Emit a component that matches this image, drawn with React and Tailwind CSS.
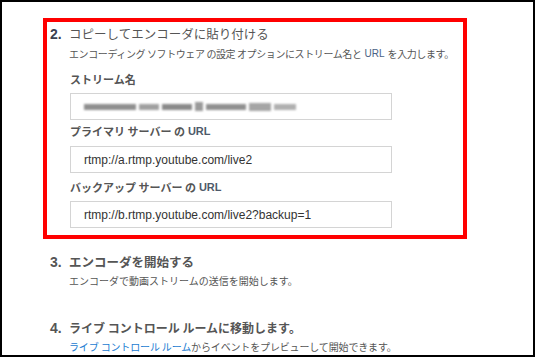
export default function App() {
  const jp = { fontFamily: '"Noto Sans CJK JP", "Liberation Sans", sans-serif' };
  const lat = { fontFamily: '"Liberation Sans", Arial, sans-serif' };
  return (
    <div className="w-[535px] h-[357px] border-2 border-black bg-white overflow-hidden text-[#555]" style={jp}>
      <div className="pl-[41px] pt-[16px]">
        {/* Section 2 */}
        <div className="w-[424px] h-[221px] border-4 border-[#ff0000] pl-[3px]">
          <div className="flex h-[24px] items-center">
            <span className="w-[19px] text-[14px] font-bold text-[#3a4150]" style={lat}>2.</span>
            <span className="text-[12.5px] text-[#555]">コピーしてエンコーダに貼り付ける</span>
          </div>
          <div className="pl-[19px] h-[14px] flex items-center text-[10px] tracking-[-0.4px] text-[#555] whitespace-nowrap">
            エンコーディング ソフトウェア の設定 オプションにストリーム名と <span className="text-[#4b6285] mx-[3px] tracking-normal" style={lat}>URL</span> を入力します。
          </div>
          <div className="pl-[20px]">
            <div className="mt-[12px] h-[14px] flex items-center text-[11px] font-bold text-[#555]">ストリーム名</div>
            <div className="mt-[7px] w-[322px] h-[27px] border border-[#d4d4d4] flex items-center pl-[13px]">
              <div className="flex items-center gap-[3px] blur-[1.3px]">
                <div className="w-[52px] h-[6px] bg-[#8f8f8f]" />
                <div className="w-[20px] h-[6px] bg-[#a0a0a0]" />
                <div className="w-[30px] h-[6px] bg-[#8a8a8a]" />
                <div className="w-[8px] h-[9px] bg-[#9a9a9a]" />
                <div className="w-[40px] h-[6px] bg-[#909090]" />
                <div className="w-[22px] h-[8px] bg-[#a5a5a5]" />
                <div className="w-[22px] h-[6px] bg-[#b0b0b0]" />
              </div>
            </div>
            <div className="mt-[4px] h-[14px] flex items-center text-[11px] font-bold text-[#555]">
              プライマリ サーバー の <span className="ml-[3px] text-[#4d5a6a]" style={lat}>URL</span>
            </div>
            <div className="mt-[8px] w-[322px] h-[27px] border border-[#d4d4d4] flex items-center pl-[13px] text-[12px] text-[#333]" style={lat}>
              rtmp://a.rtmp.youtube.com/live2
            </div>
            <div className="mt-[7px] h-[14px] flex items-center text-[11px] font-bold text-[#555]">
              バックアップ サーバー の <span className="ml-[3px] text-[#4d5a6a]" style={lat}>URL</span>
            </div>
            <div className="mt-[7px] w-[322px] h-[27px] border border-[#d4d4d4] flex items-center pl-[13px] text-[12px] text-[#333]" style={lat}>
              rtmp://b.rtmp.youtube.com/live2?backup=1
            </div>
          </div>
        </div>

        {/* Section 3 */}
        <div className="pl-[7px] mt-[12px]">
          <div className="flex h-[22px] items-center">
            <span className="w-[19px] text-[14px] font-bold text-[#555]" style={lat}>3.</span>
            <span className="text-[12.5px] font-bold text-[#555]">エンコーダを開始する</span>
          </div>
          <div className="pl-[19px] h-[14px] flex items-center text-[10px] text-[#555] whitespace-nowrap">
            エンコーダで動画ストリームの送信を開始します。
          </div>
        </div>

        {/* Section 4 */}
        <div className="pl-[7px] mt-[30px]">
          <div className="flex h-[22px] items-center">
            <span className="w-[19px] text-[14px] font-bold text-[#555]" style={lat}>4.</span>
            <span className="text-[12px] font-bold text-[#555] whitespace-nowrap">ライブ コントロール ルームに移動します。</span>
          </div>
          <div className="pl-[19px] h-[14px] flex items-center text-[10px] tracking-[-0.15px] text-[#555] whitespace-nowrap">
            <span className="text-[#1a7bd1]">ライブ コントロール ルーム</span>からイベントをプレビューして開始できます。
          </div>
        </div>
      </div>
    </div>
  );
}
